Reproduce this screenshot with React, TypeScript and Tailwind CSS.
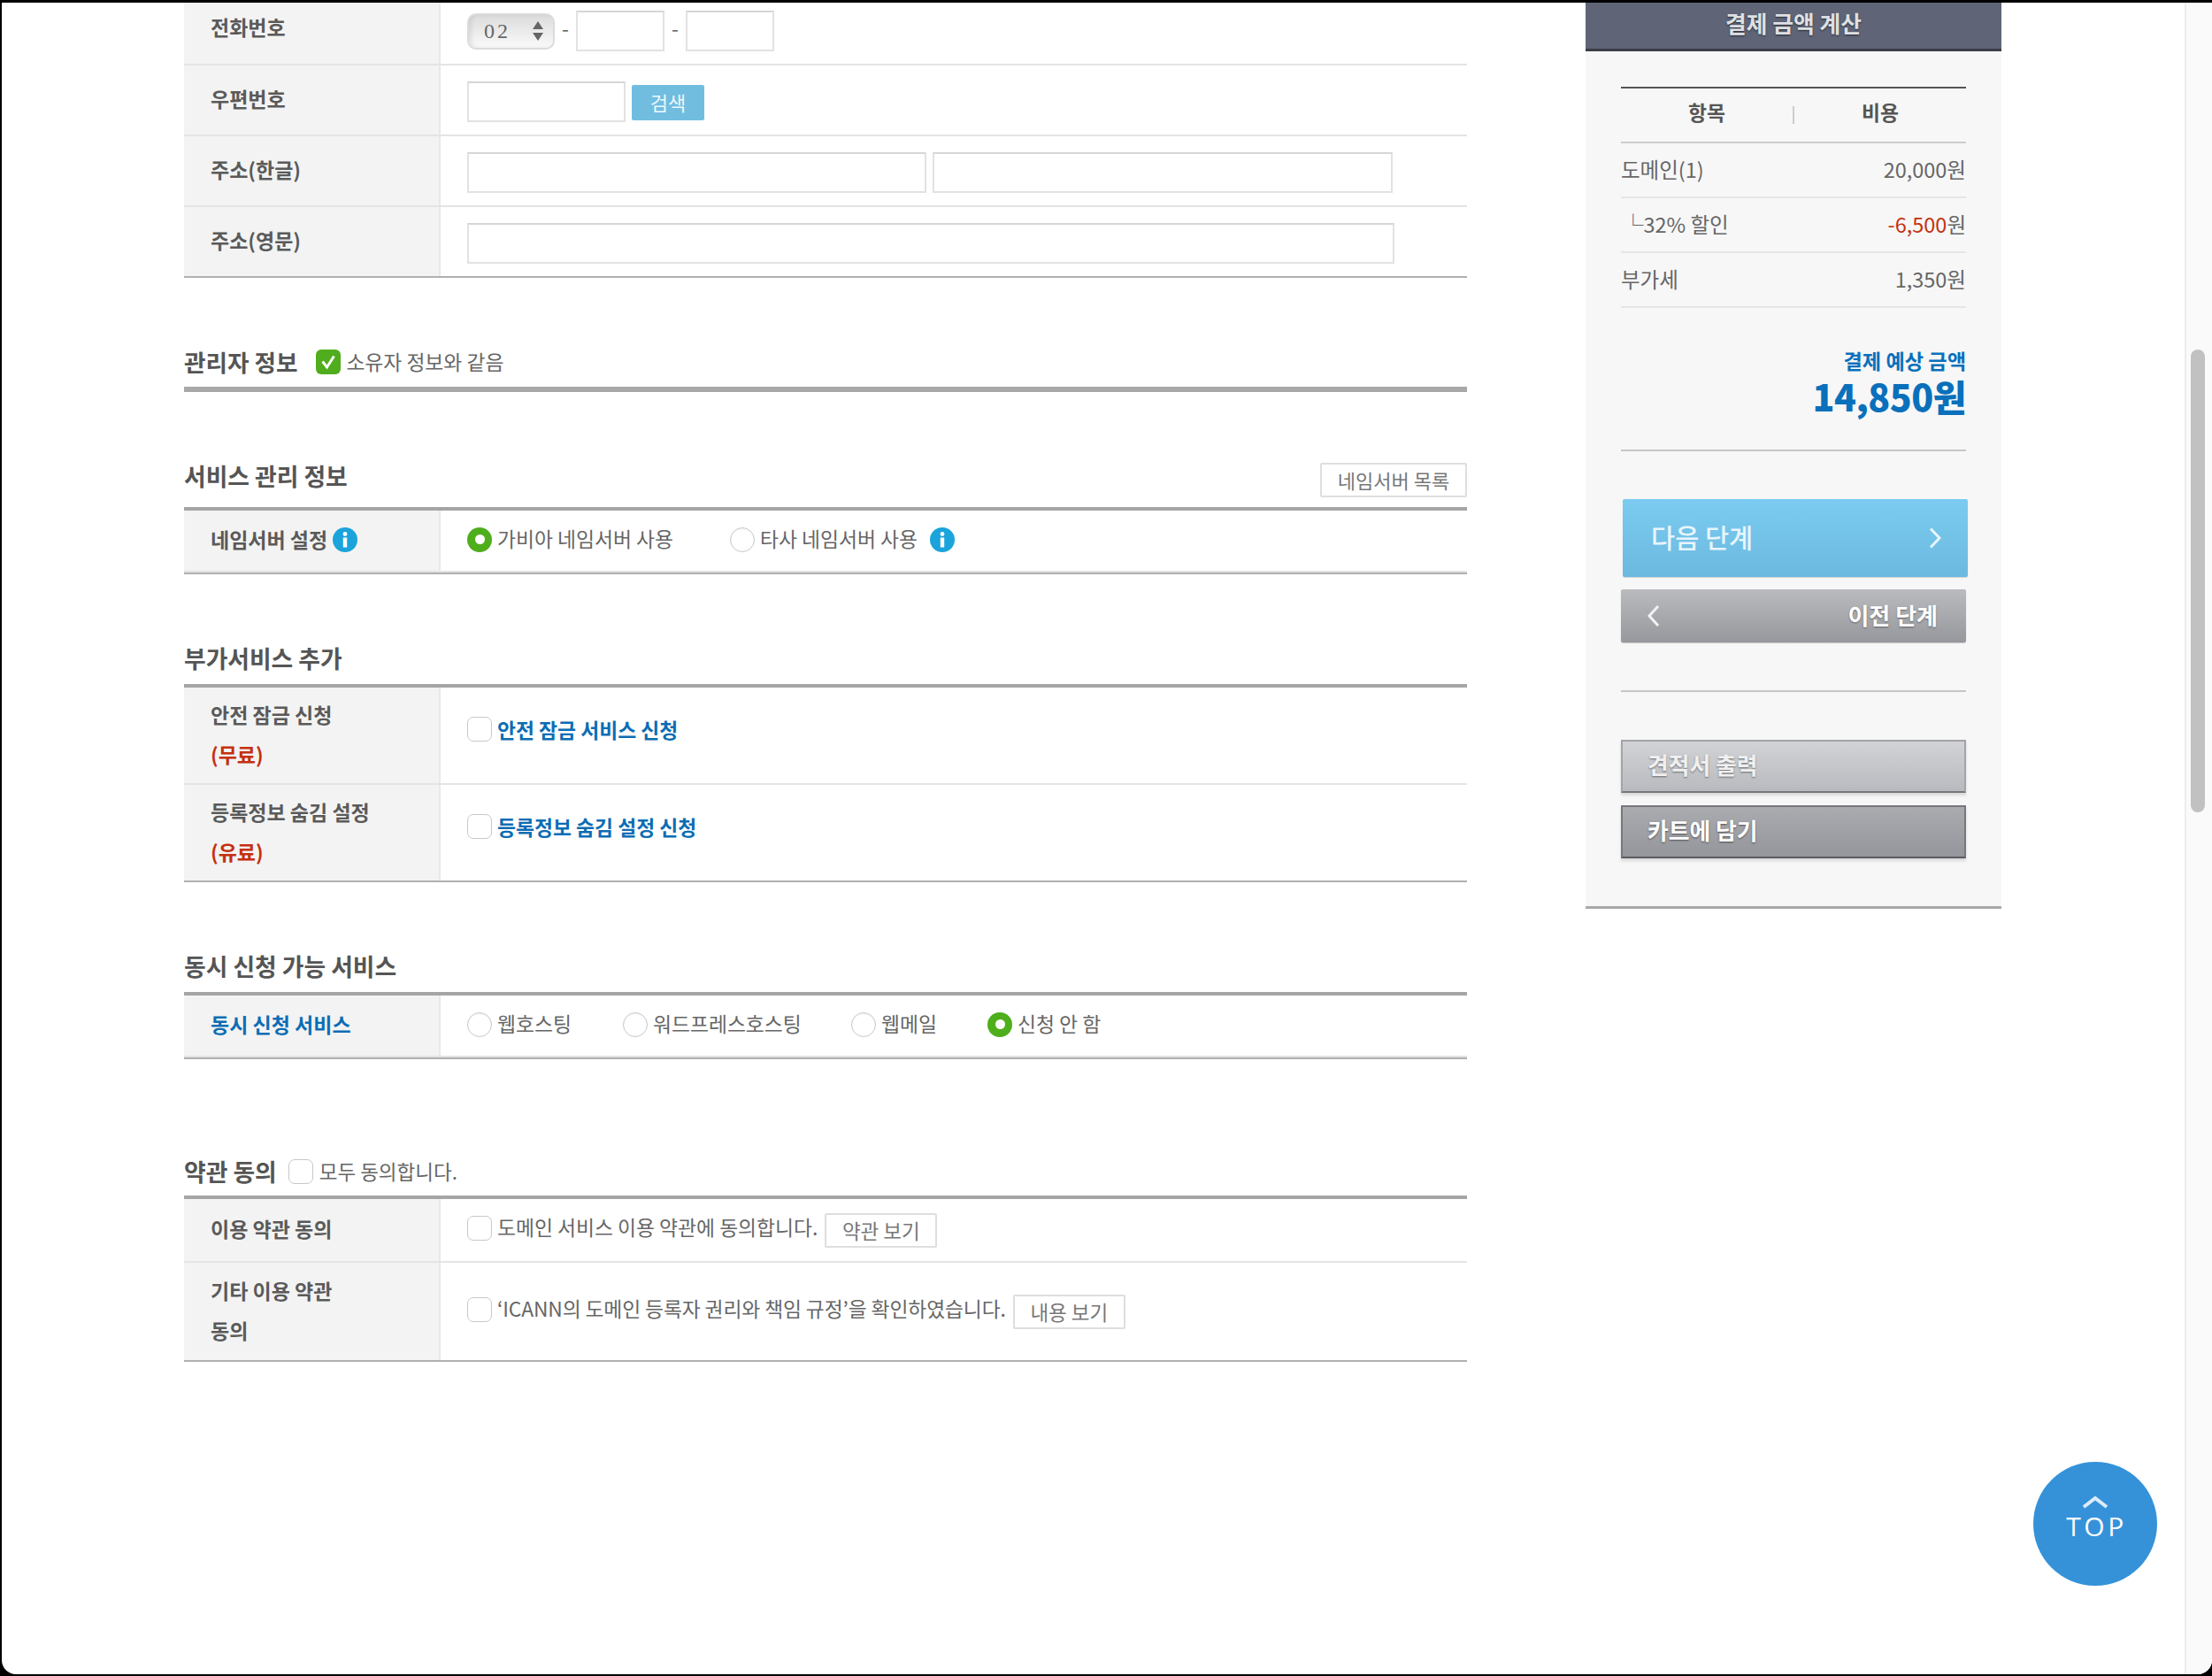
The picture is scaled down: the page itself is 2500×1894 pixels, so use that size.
import React from "react";

const InfoIcon = () => (
  <svg width="28" height="28" viewBox="0 0 28 28" className="shrink-0">
    <circle cx="14" cy="14" r="14" fill="#1ba4dc" />
    <circle cx="14" cy="7.5" r="2.4" fill="#fff" />
    <rect x="11.8" y="11.5" width="4.4" height="11" fill="#fff" />
  </svg>
);

const Radio = ({ on }: { on?: boolean }) =>
  on ? (
    <span className="w-[28px] h-[28px] rounded-full bg-[#4fae1c] shrink-0 flex items-center justify-center">
      <span className="w-[11px] h-[11px] rounded-full bg-white" />
    </span>
  ) : (
    <span className="w-[28px] h-[28px] rounded-full bg-white border border-[#c8c8c8] shadow-[inset_0_1px_2px_rgba(0,0,0,0.06)] shrink-0" />
  );

const Check = ({ on }: { on?: boolean }) =>
  on ? (
    <span className="w-[28px] h-[28px] rounded-[6px] bg-[#50ad1d] shrink-0 flex items-center justify-center">
      <svg width="20" height="20" viewBox="0 0 20 20">
        <path d="M3.5 9.5 L8.5 16 L16.5 3.5" fill="none" stroke="#fff" strokeWidth="3" />
      </svg>
    </span>
  ) : (
    <span className="w-[28px] h-[28px] rounded-[7px] bg-white border border-[#c8c8c8] shrink-0" />
  );

const Row = ({
  label,
  last,
  strip,
  h,
  value,
  children,
}: {
  label: React.ReactNode;
  last?: boolean;
  strip?: boolean;
  h: string;
  value?: string;
  children: React.ReactNode;
}) => (
  <div
    className={`flex ${h} border-b-2 ${last ? "border-[#b0b0b0]" : "border-[#e4e4e4]"} ${
      strip ? "[&>div]:border-b-2 [&>div]:border-b-[#e2e2e2]" : ""
    }`}
  >
    <div className="w-[290px] shrink-0 bg-[#f3f3f3] border-r-2 border-r-[#e8e8e8] pl-[30px] pb-[3px] flex flex-col justify-center text-[23px] leading-[45px] font-bold text-[#5a5a5a]">
      {label}
    </div>
    <div className={`flex-1 pl-[30px] flex items-center text-[22.8px] text-[#666] ${value ?? ""}`}>{children}</div>
  </div>
);

const Input = ({ w }: { w: string }) => (
  <span className={`${w} h-[46px] border-2 border-[#e2e2e2] border-t-[#d6d6d6] bg-white block shrink-0`} />
);

const SmallBtn = ({ w, children }: { w: string; children: React.ReactNode }) => (
  <span className={`${w} h-[39px] ml-[8px] mt-[6px] border-2 border-[#dedede] rounded-[2px] bg-white flex items-center justify-center text-[22.5px] text-[#777] shrink-0`}>
    {children}
  </span>
);

const CostRow = ({ left, right }: { left: React.ReactNode; right: React.ReactNode }) => (
  <div className="h-[62px] border-b-2 border-[#e6e6e6] flex items-center justify-between text-[23.5px] text-[#666]">
    <span>{left}</span>
    <span>{right}</span>
  </div>
);

export default function App() {
  return (
    <div
      className="relative w-[2500px] h-[1894px] bg-black pt-[3px] pl-[2px] pb-[2px] overflow-hidden"
      style={{ fontFamily: '"Noto Sans CJK KR", "Noto Sans", sans-serif' }}
    >
      <div className="flex h-full bg-white rounded-b-[16px] overflow-hidden">
        {/* main form */}
        <div className="ml-[206px] w-[1450px] shrink-0">
          <div className="-mt-[11px]">
            <Row h="h-[82px]" value="pt-[6px]" label="전화번호">
              <span className="w-[99px] h-[41px] rounded-[10px] border-2 border-[#dcdcdc] bg-gradient-to-b from-[#dcdcdc] to-[#fafafa] shadow-[inset_3px_0_4px_rgba(0,0,0,0.08)] flex items-center justify-between pl-[17px] pr-[10px] shrink-0">
                <span className="text-[24px] tracking-[3px] text-[#666]" style={{ fontFamily: '"Liberation Serif", serif' }}>
                  02
                </span>
                <svg width="14" height="24" viewBox="0 0 14 24">
                  <path d="M7 1 L13 10 L1 10 Z M1 14 L13 14 L7 23 Z" fill="#666" />
                </svg>
              </span>
              <span className="w-[24px] text-center mb-[6px]">-</span>
              <Input w="w-[100px]" />
              <span className="w-[24px] text-center mb-[6px]">-</span>
              <Input w="w-[100px]" />
            </Row>
          </div>
          <Row h="h-[80px]" value="pt-[3px]" label="우편번호">
            <Input w="w-[179px]" />
            <span className="w-[82px] h-[40px] ml-[7px] mt-[2px] rounded-[2px] bg-[#70bde0] flex items-center justify-center text-[22px] text-[#eef8fc]">
              검색
            </span>
          </Row>
          <Row h="h-[80px]" value="pt-[3px]" label="주소(한글)">
            <Input w="w-[519px]" />
            <span className="w-[7px]" />
            <Input w="w-[520px]" />
          </Row>
          <Row h="h-[80px]" value="pt-[3px]" last label="주소(영문)">
            <Input w="w-[1048px]" />
          </Row>

          <div className="mt-[75px] flex items-end pb-[8px] border-b-[6px] border-[#a8a8a8]">
            <h2 className="h-[40px] leading-[40px] text-[26.6px] font-bold text-[#555]">관리자 정보</h2>
            <span className="ml-[21px] h-[40px] flex items-center text-[22.8px] text-[#666]">
              <Check on />
              <span className="ml-[6px]">소유자 정보와 같음</span>
            </span>
          </div>

          <div className="mt-[75px] flex items-end justify-between border-b-4 border-[#a5a5a5]">
            <h2 className="h-[40px] leading-[40px] mb-[15px] text-[26.8px] font-bold text-[#555]">서비스 관리 정보</h2>
            <span className="w-[166px] h-[39px] mb-[11px] border-2 border-[#dedede] rounded-[2px] flex items-center justify-center text-[22px] text-[#777]">
              네임서버 목록
            </span>
          </div>
          <Row
            h="h-[72px]"
            last
            strip
            value="pb-[3px]"
            label={
              <span className="flex items-center">
                네임서버 설정
                <span className="ml-[6px] flex">
                  <InfoIcon />
                </span>
              </span>
            }
          >
            <Radio on />
            <span className="ml-[6px] w-[263px]">가비아 네임서버 사용</span>
            <Radio />
            <span className="ml-[6px]">타사 네임서버 사용</span>
            <span className="ml-[14px] flex">
              <InfoIcon />
            </span>
          </Row>

          <div className="mt-[75px] pb-[9px] border-b-4 border-[#a5a5a5]">
            <h2 className="h-[40px] leading-[40px] text-[26.8px] font-bold text-[#555]">부가서비스 추가</h2>
          </div>
          <Row
            h="h-[110px]"
            value="pb-[15px]"
            label={
              <>
                <span>안전 잠금 신청</span>
                <span className="text-[#c4310f]">(무료)</span>
              </>
            }
          >
            <Check />
            <span className="ml-[6px] mt-[3px] font-bold text-[#0c6db4]">안전 잠금 서비스 신청</span>
          </Row>
          <Row
            h="h-[110px]"
            last
            value="pb-[15px]"
            label={
              <>
                <span>등록정보 숨김 설정</span>
                <span className="text-[#c4310f]">(유료)</span>
              </>
            }
          >
            <Check />
            <span className="ml-[6px] mt-[3px] font-bold text-[#0c6db4]">등록정보 숨김 설정 신청</span>
          </Row>

          <div className="mt-[75px] pb-[9px] border-b-4 border-[#a5a5a5]">
            <h2 className="h-[40px] leading-[40px] text-[26.8px] font-bold text-[#555]">동시 신청 가능 서비스</h2>
          </div>
          <Row h="h-[72px]" last strip value="pb-[3px]" label={<span className="text-[#0c6db4]">동시 신청 서비스</span>}>
            <Radio />
            <span className="ml-[6px] w-[142px]">웹호스팅</span>
            <Radio />
            <span className="ml-[6px] w-[224px]">워드프레스호스팅</span>
            <Radio />
            <span className="ml-[6px] w-[120px]">웹메일</span>
            <Radio on />
            <span className="ml-[6px]">신청 안 함</span>
          </Row>

          <div className="mt-[107px] flex items-end pb-[7px] border-b-4 border-[#a5a5a5]">
            <h2 className="h-[40px] leading-[40px] text-[26.8px] font-bold text-[#555]">약관 동의</h2>
            <span className="ml-[13px] h-[40px] flex items-center text-[22.5px] text-[#666]">
              <Check />
              <span className="ml-[7px]">모두 동의합니다.</span>
            </span>
          </div>
          <Row h="h-[72px]" value="pb-[5px]" label="이용 약관 동의">
            <Check />
            <span className="ml-[6px]">도메인 서비스 이용 약관에 동의합니다.</span>
            <SmallBtn w="w-[127px]">약관 보기</SmallBtn>
          </Row>
          <Row
            h="h-[112px]"
            last
            value="pb-[5px]"
            label={
              <>
                <span>기타 이용 약관</span>
                <span>동의</span>
              </>
            }
          >
            <Check />
            <span className="ml-[6px] tracking-[-0.12px]">‘ICANN의 도메인 등록자 권리와 책임 규정’을 확인하였습니다.</span>
            <SmallBtn w="w-[127px]">내용 보기</SmallBtn>
          </Row>
        </div>

        {/* price panel */}
        <aside className="ml-[134px] w-[470px] shrink-0 self-start bg-[#f7f7f7] border-b-[3px] border-[#a9a9a9]">
          <div className="h-[55px] pb-[5px] border-b-[3px] border-[#3b3e47] bg-[#5f6577] flex items-center justify-center text-[25.8px] font-bold text-[#dfe0e3] [text-shadow:0_1px_2px_rgba(0,0,0,0.6)]">
            결제 금액 계산
          </div>
          <div className="px-[40px] pt-[40px] pb-[54px]">
            <div className="h-[64px] pb-[5px] border-t-2 border-b-2 border-t-[#555] border-b-[#cccccc] flex items-center text-[22.8px] font-bold text-[#555]">
              <span className="w-[194px] text-center">항목</span>
              <span className="w-[2px] h-[20px] bg-[#cccccc] mt-[5px]" />
              <span className="flex-1 text-center">비용</span>
            </div>
            <CostRow left="도메인(1)" right="20,000원" />
            <CostRow
              left={<span className="pl-[2px]">└32% 할인</span>}
              right={
                <>
                  <span className="text-[#c4310f]">-6,500</span>원
                </>
              }
            />
            <CostRow left="부가세" right="1,350원" />
            <div className="mt-[41px] pb-[39px] border-b-2 border-[#c6c6c6] text-right text-[#0a70bb] font-bold">
              <div className="h-[36px] leading-[36px] text-[23.2px]">결제 예상 금액</div>
              <div className="h-[44px] leading-[44px] text-[41px] tracking-[-0.5px] font-black">14,850원</div>
            </div>
            <div className="mt-[54px] w-[390px] ml-[2px] h-[88px] pb-[3px] rounded-[2px] bg-gradient-to-b from-[#7bcbf1] to-[#6cb9df] shadow-[0_1px_1px_rgba(0,0,0,0.15)] pl-[32px] pr-[30px] flex items-center justify-between text-[29.5px] font-medium text-[#e6f5fc]">
              다음 단계
              <svg width="14" height="24" viewBox="0 0 14 24" className="mt-[3px]">
                <path d="M2 1.5 L12 12 L2 22.5" fill="none" stroke="#e8f6fd" strokeWidth="3" />
              </svg>
            </div>
            <div className="mt-[14px] h-[60px] pb-[3px] rounded-[2px] bg-gradient-to-b from-[#babbbe] to-[#97989d] shadow-[0_1px_1px_rgba(0,0,0,0.2)] pl-[29px] pr-[32px] flex items-center justify-between text-[26px] font-bold text-white [text-shadow:0_1px_2px_rgba(0,0,0,0.4)]">
              <svg width="16" height="26" viewBox="0 0 16 26" className="mt-[3px]">
                <path d="M13 2 L3 13 L13 24" fill="none" stroke="#f2f2f2" strokeWidth="3" />
              </svg>
              이전 단계
            </div>
            <div className="mt-[54px] h-[2px] bg-[#c6c6c6]" />
            <div className="mt-[54px] h-[60px] pb-[4px] border-2 border-[#a3a4a8] border-b-[#77787c] bg-gradient-to-b from-[#d2d3d6] to-[#b9babf] pl-[28px] flex items-center text-[25.8px] font-bold text-[#f0f0f0] shadow-[0_3px_3px_rgba(0,0,0,0.12)] [text-shadow:0_1px_2px_rgba(0,0,0,0.45)]">
              견적서 출력
            </div>
            <div className="mt-[14px] h-[60px] pb-[4px] border-2 border-[#77787c] border-b-[#5c5d61] bg-gradient-to-b from-[#aaabaf] to-[#95969c] pl-[28px] flex items-center text-[25.8px] font-bold text-white shadow-[0_3px_3px_rgba(0,0,0,0.12)] [text-shadow:0_1px_2px_rgba(0,0,0,0.5)]">
              카트에 담기
            </div>
          </div>
        </aside>

        {/* scrollbar */}
        <div className="ml-auto w-[31px] shrink-0 bg-[#fafafa] border-l-2 border-[#ececec] pl-[5px]">
          <div className="mt-[392px] w-[16px] h-[523px] rounded-full bg-[#c1c1c1]" />
        </div>
      </div>

      {/* floating top button */}
      <div className="absolute left-[2298px] top-[1652px] w-[140px] h-[140px] rounded-full bg-[#3592d9] flex flex-col items-center pt-[38px] text-white">
        <svg width="30" height="15" viewBox="0 0 30 15">
          <path d="M2 13 L15 3 L28 13" fill="none" stroke="#dcecf8" strokeWidth="4" />
        </svg>
        <span className="mt-[2px] text-[30px] leading-[36px] tracking-[3.5px] pl-[3px]" style={{ fontFamily: '"Open Sans", sans-serif' }}>
          TOP
        </span>
      </div>
    </div>
  );
}
